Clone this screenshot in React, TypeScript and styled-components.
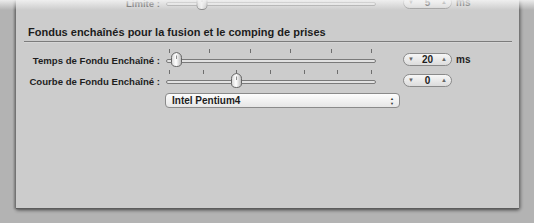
import styled, { createGlobalStyle } from "styled-components";

const GlobalStyle = createGlobalStyle`
    html, body {
        margin: 0;
        padding: 0;
        background: #b3b3b3;
    }
    body {
        font-family: "Liberation Sans", Arial, sans-serif;
    }
`;

type SliderProps = { ticks: number; thumb: number };

function Slider({ ticks, thumb }: SliderProps) {
    const first = 3;
    const last = 205;
    const step = (last - first) / (ticks - 1);
    const marks = Array.from({ length: ticks }, (_, i) => Math.round(first + i * step) + 0.5);
    return (
        <SliderSvg width="212" height="19" viewBox="0 0 212 19">
            <defs>
                <linearGradient id="thumbFill" x1="0" y1="0" x2="1" y2="0">
                    <stop offset="0" stopColor="#d4d4d4" />
                    <stop offset="0.45" stopColor="#ffffff" />
                    <stop offset="1" stopColor="#b8b8b8" />
                </linearGradient>
            </defs>
            {marks.map((x) => (
                <line key={x} x1={x} y1="1" x2={x} y2="5" stroke="#6e6e6e" strokeWidth="1" />
            ))}
            <rect x="0.5" y="11.5" width="209" height="3" rx="1.5" fill="#e2e2e2" stroke="#7a7a7a" strokeWidth="1" />
            <path
                d={`M ${thumb - 5} 9.5 Q ${thumb - 5} 5.5 ${thumb} 4.5 Q ${thumb + 5} 5.5 ${thumb + 5} 9.5 L ${thumb + 5} 14.5 Q ${thumb + 5} 18.5 ${thumb} 18.5 Q ${thumb - 5} 18.5 ${thumb - 5} 14.5 Z`}
                fill="url(#thumbFill)"
                stroke="#656565"
                strokeWidth="1"
            />
            <line x1={thumb} y1="7.5" x2={thumb} y2="11" stroke="#8e8e8e" strokeWidth="1" />
        </SliderSvg>
    );
}

function Stepper({ value }: { value: string }) {
    return (
        <StepperBox>
            <Arrow>▼</Arrow>
            <StepperValue>{value}</StepperValue>
            <Arrow>▲</Arrow>
        </StepperBox>
    );
}

type RowProps = { label: string; ticks: number; thumb: number; value: string; unit?: string };

function SliderRow({ label, ticks, thumb, value, unit }: RowProps) {
    return (
        <Row>
            <Label>{label}</Label>
            <Slider ticks={ticks} thumb={thumb} />
            <Stepper value={value} />
            {unit && <Unit>{unit}</Unit>}
        </Row>
    );
}

export default function App() {
    return (
        <>
            <GlobalStyle />
            <Page>
                <Panel>
                    <TopRow>
                        <SliderRow label="Limite :" ticks={2} thumb={36} value="5" unit="ms" />
                    </TopRow>
                    <SectionTitle>Fondus enchaînés pour la fusion et le comping de prises</SectionTitle>
                    <Divider />
                    <Rows>
                        <SliderRow label="Temps de Fondu Enchaîné :" ticks={6} thumb={10.5} value="20" unit="ms" />
                        <SliderRow label="Courbe de Fondu Enchaîné :" ticks={7} thumb={70.5} value="0" />
                    </Rows>
                    <Popup>
                        <PopupText>Intel Pentium4</PopupText>
                        <PopupArrows>
                            <span>▲</span>
                            <span>▼</span>
                        </PopupArrows>
                    </Popup>
                </Panel>
                <TopFade />
            </Page>
        </>
    );
}

const Page = styled.div`
    position: relative;
    width: 534px;
    height: 223px;
    overflow: hidden;
    background: #b3b3b3;
`;

const TopFade = styled.div`
    position: absolute;
    left: 0;
    top: 0;
    right: 0;
    height: 10px;
    background: linear-gradient(to bottom, rgba(245, 245, 245, 0.85), rgba(245, 245, 245, 0));
    pointer-events: none;
`;

const Panel = styled.div`
    margin-left: 16px;
    width: 503px;
    height: 208px;
    background: #cccccc;
    border-bottom: 1px solid #5c5c5c;
    box-shadow: -2px 0 2px rgba(0, 0, 0, 0.28), 2px 0 3px rgba(0, 0, 0, 0.3), 0 2px 3px rgba(0, 0, 0, 0.3);
    display: flex;
    flex-direction: column;
`;

const TopRow = styled.div`
    margin-top: -9px;
    opacity: 0.7;
`;

const SectionTitle = styled.div`
    margin: 16px 0 0 12px;
    font-size: 11px;
    line-height: 13px;
    font-weight: bold;
    color: #1c1c1c;
`;

const Divider = styled.div`
    margin: 2px 7px 0 8px;
    height: 1px;
    background: #7c7c7c;
    border-bottom: 1px solid #d6d6d6;
`;

const Rows = styled.div`
    margin-top: 5px;
    display: flex;
    flex-direction: column;
    gap: 2px;
`;

const Row = styled.div`
    display: flex;
    align-items: flex-start;
    height: 19px;
`;

const Label = styled.div`
    width: 144px;
    padding-right: 4px;
    margin-top: 6px;
    text-align: right;
    font-size: 9.6px;
    line-height: 13px;
    font-weight: bold;
    color: #1e1e1e;
    white-space: nowrap;
`;

const SliderSvg = styled.svg`
    display: block;
    margin-left: 2px;
    flex-shrink: 0;
`;

const StepperBox = styled.div`
    margin: 5px 0 0 25px;
    box-sizing: border-box;
    width: 49px;
    height: 13px;
    border: 1px solid #8a8a8a;
    border-radius: 7px;
    background: linear-gradient(to bottom, #f7f7f7, #dcdcdc);
    display: flex;
    align-items: center;
    justify-content: space-between;
    padding: 0 4px;
`;

const Arrow = styled.span`
    font-size: 6px;
    line-height: 11px;
    color: #666;
`;

const StepperValue = styled.span`
    font-size: 10px;
    line-height: 11px;
    font-weight: bold;
    color: #1e1e1e;
`;

const Unit = styled.span`
    margin: 5px 0 0 4px;
    font-size: 10px;
    line-height: 13px;
    font-weight: bold;
    color: #1e1e1e;
`;

const Popup = styled.div`
    margin: 5px 0 0 149px;
    box-sizing: border-box;
    width: 235px;
    height: 15px;
    border: 1px solid #8a8a8a;
    border-radius: 4px;
    background: linear-gradient(to bottom, #fdfdfd, #e6e6e6);
    display: flex;
    align-items: center;
    justify-content: space-between;
    padding: 0 5px 0 6px;
`;

const PopupText = styled.span`
    font-size: 10px;
    line-height: 13px;
    font-weight: bold;
    color: #1e1e1e;
`;

const PopupArrows = styled.span`
    display: flex;
    flex-direction: column;
    font-size: 4px;
    line-height: 5px;
    color: #333;
`;
